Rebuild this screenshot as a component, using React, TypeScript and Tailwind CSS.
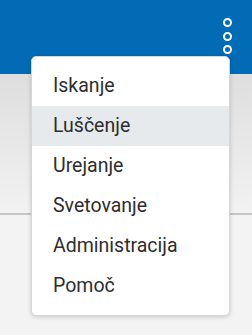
const items = ['Iskanje', 'Luščenje', 'Urejanje', 'Svetovanje', 'Administracija', 'Pomoč'];

export default function App() {
  return (
    <div className="relative h-[335px] w-[252px] overflow-hidden bg-[#f3f3f3] font-['Roboto',sans-serif]">
      <header className="flex h-[74px] justify-end bg-[#016bb5] pr-[20px] pt-[18px]">
        <button className="flex h-[36px] flex-col items-center justify-between" aria-label="Menu">
          {[0, 1, 2].map((i) => (
            <span key={i} className="block h-[9px] w-[9px] rounded-full border-[2.5px] border-white" />
          ))}
        </button>
      </header>
      <div className="h-[141px] border-b-2 border-[#c6c6c6] bg-gradient-to-b from-[#dedede] to-[#f2f2f2]" />

      {/* dropdown */}
      <ul className="absolute left-[31px] top-[56px] w-[199px] rounded-[5px] border border-[#d6d6d6] bg-white py-[9px] shadow-[0_1px_4px_rgba(0,0,0,0.18)]">
        {items.map((label, i) => (
          <li
            key={label}
            className={`flex h-10 items-center pl-[21px] text-[19.5px] text-[#2e2e2e] ${i === 1 ? 'bg-[#e7eaed]' : ''}`}
          >
            {label}
          </li>
        ))}
      </ul>
    </div>
  );
}
